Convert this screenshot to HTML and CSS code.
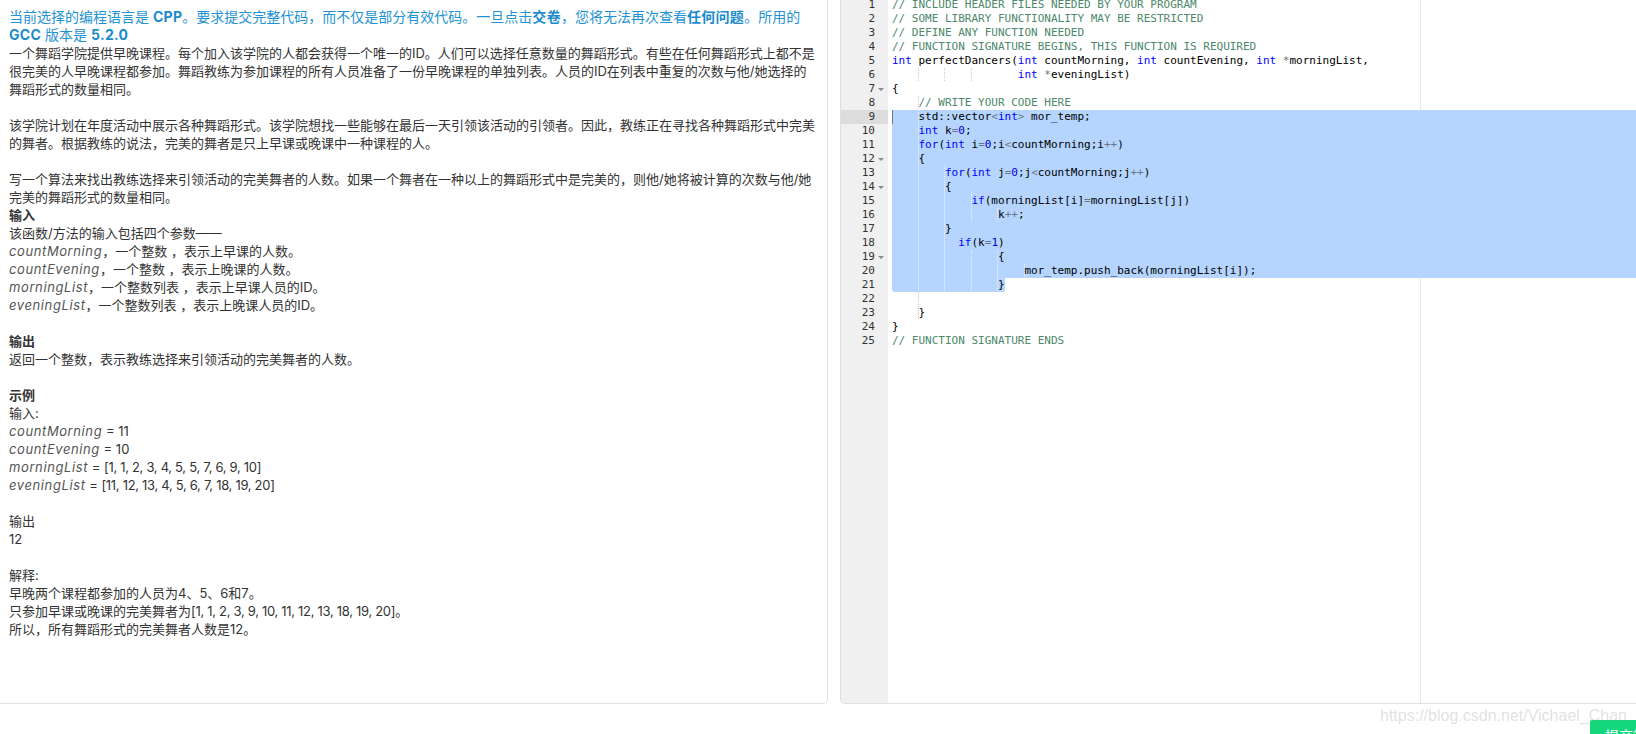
FILE: index.html
```html
<!DOCTYPE html>
<html lang="zh-CN">
<head>
<meta charset="utf-8">
<title>perfectDancers</title>
<link rel="stylesheet" href="styles.css">
</head>
<body>
<div class="page">
  <div class="main">
    <section class="problem">
      <p class="notice">当前选择的编程语言是 <b>CPP</b>。要求提交完整代码，而不仅是部分有效代码。一旦点击<b>交卷</b>，您将无法再次查看<b>任何问题</b>。所用的<br><b>GCC</b> 版本是 <b>5.2.0</b></p>
      <p class="gap">一个舞蹈学院提供早晚课程。每个加入该学院的人都会获得一个唯一的ID。人们可以选择任意数量的舞蹈形式。有些在任何舞蹈形式上都不是<br>很完美的人早晚课程都参加。舞蹈教练为参加课程的所有人员准备了一份早晚课程的单独列表。人员的ID在列表中重复的次数与他/她选择的<br>舞蹈形式的数量相同。</p>
      <p class="gap">该学院计划在年度活动中展示各种舞蹈形式。该学院想找一些能够在最后一天引领该活动的引领者。因此，教练正在寻找各种舞蹈形式中完美<br>的舞者。根据教练的说法，完美的舞者是只上早课或晚课中一种课程的人。</p>
      <p>写一个算法来找出教练选择来引领活动的完美舞者的人数。如果一个舞者在一种以上的舞蹈形式中是完美的，则他/她将被计算的次数与他/她<br>完美的舞蹈形式的数量相同。</p>
      <h4>输入</h4>
      <p class="gap">该函数/方法的输入包括四个参数——<br><i>countMorning</i>，一个整数 ，表示上早课的人数。<br><i>countEvening</i>，一个整数 ，表示上晚课的人数。<br><i>morningList</i>，一个整数列表 ，表示上早课人员的ID。<br><i>eveningList</i>，一个整数列表 ，表示上晚课人员的ID。</p>
      <h4>输出</h4>
      <p class="gap">返回一个整数，表示教练选择来引领活动的完美舞者的人数。</p>
      <h4>示例</h4>
      <p class="gap">输入:<br><i>countMorning</i> = 11<br><i>countEvening</i> = 10<br><i>morningList</i> = <span class="nums">[1, 1, 2, 3, 4, 5, 5, 7, 6, 9, 10]</span><br><i>eveningList</i> = <span class="nums">[11, 12, 13, 4, 5, 6, 7, 18, 19, 20]</span></p>
      <p class="gap">输出<br>12</p>
      <p>解释:<br>早晚两个课程都参加的人员为4、5、6和7。<br>只参加早课或晚课的完美舞者为<span class="nums">[1, 1, 2, 3, 9, 10, 11, 12, 13, 18, 19, 20]</span>。<br>所以，所有舞蹈形式的完美舞者人数是12。</p>
    </section>

    <section class="editor">
      <div class="gutter">
        <div class="gutter-cells">
          <div class="cell"><span>1</span><i class="fold"></i></div>
          <div class="cell"><span>2</span><i class="fold"></i></div>
          <div class="cell"><span>3</span><i class="fold"></i></div>
          <div class="cell"><span>4</span><i class="fold"></i></div>
          <div class="cell"><span>5</span><i class="fold"></i></div>
          <div class="cell"><span>6</span><i class="fold"></i></div>
          <div class="cell"><span>7</span><i class="fold open"></i></div>
          <div class="cell"><span>8</span><i class="fold"></i></div>
          <div class="cell active"><span>9</span><i class="fold"></i></div>
          <div class="cell"><span>10</span><i class="fold"></i></div>
          <div class="cell"><span>11</span><i class="fold"></i></div>
          <div class="cell"><span>12</span><i class="fold open"></i></div>
          <div class="cell"><span>13</span><i class="fold"></i></div>
          <div class="cell"><span>14</span><i class="fold open"></i></div>
          <div class="cell"><span>15</span><i class="fold"></i></div>
          <div class="cell"><span>16</span><i class="fold"></i></div>
          <div class="cell"><span>17</span><i class="fold"></i></div>
          <div class="cell"><span>18</span><i class="fold"></i></div>
          <div class="cell"><span>19</span><i class="fold open"></i></div>
          <div class="cell"><span>20</span><i class="fold"></i></div>
          <div class="cell"><span>21</span><i class="fold"></i></div>
          <div class="cell"><span>22</span><i class="fold"></i></div>
          <div class="cell"><span>23</span><i class="fold"></i></div>
          <div class="cell"><span>24</span><i class="fold"></i></div>
          <div class="cell"><span>25</span><i class="fold"></i></div>
        </div>
      </div>
      <div class="scroller">
        <div class="print-margin"></div>
        <div class="lines">
<div class="line"><span class="c">// INCLUDE HEADER FILES NEEDED BY YOUR PROGRAM</span></div>
<div class="line"><span class="c">// SOME LIBRARY FUNCTIONALITY MAY BE RESTRICTED</span></div>
<div class="line"><span class="c">// DEFINE ANY FUNCTION NEEDED</span></div>
<div class="line"><span class="c">// FUNCTION SIGNATURE BEGINS, THIS FUNCTION IS REQUIRED</span></div>
<div class="line"><span class="k">int</span> perfectDancers(<span class="k">int</span> countMorning, <span class="k">int</span> countEvening, <span class="k">int</span> <span class="o">*</span>morningList,</div>
<div class="line"><span class="ig">    </span><span class="ig">    </span><span class="ig">    </span>       <span class="k">int</span> <span class="o">*</span>eveningList)</div>
<div class="line">{</div>
<div class="line"><span class="ig">    </span><span class="c">// WRITE YOUR CODE HERE</span></div>
<div class="line sel"><span class="cursor"></span><span class="ig">    </span>std::vector<span class="o">&lt;</span><span class="k">int</span><span class="o">&gt;</span> mor_temp;</div>
<div class="line sel"><span class="ig">    </span><span class="k">int</span> k<span class="o">=</span><span class="n">0</span>;</div>
<div class="line sel"><span class="ig">    </span><span class="k">for</span>(<span class="k">int</span> i<span class="o">=</span><span class="n">0</span>;i<span class="o">&lt;</span>countMorning;i<span class="o">++</span>)</div>
<div class="line sel"><span class="ig">    </span>{</div>
<div class="line sel"><span class="ig">    </span><span class="ig">    </span><span class="k">for</span>(<span class="k">int</span> j<span class="o">=</span><span class="n">0</span>;j<span class="o">&lt;</span>countMorning;j<span class="o">++</span>)</div>
<div class="line sel"><span class="ig">    </span><span class="ig">    </span>{</div>
<div class="line sel"><span class="ig">    </span><span class="ig">    </span><span class="ig">    </span><span class="k">if</span>(morningList[i]<span class="o">=</span>morningList[j])</div>
<div class="line sel"><span class="ig">    </span><span class="ig">    </span><span class="ig">    </span><span class="ig">    </span>k<span class="o">++</span>;</div>
<div class="line sel"><span class="ig">    </span><span class="ig">    </span>}</div>
<div class="line sel"><span class="ig">    </span><span class="ig">    </span>  <span class="k">if</span>(k<span class="o">=</span><span class="n">1</span>)</div>
<div class="line sel"><span class="ig">    </span><span class="ig">    </span><span class="ig">    </span><span class="ig">    </span>{</div>
<div class="line sel"><span class="ig">    </span><span class="ig">    </span><span class="ig">    </span><span class="ig">    </span><span class="ig">    </span>mor_temp.push_back(morningList[i]);</div>
<div class="line"><span class="sel-end"><span class="ig">    </span><span class="ig">    </span><span class="ig">    </span><span class="ig">    </span>}</span></div>
<div class="line"><span class="ig">    </span></div>
<div class="line"><span class="ig">    </span>}</div>
<div class="line">}</div>
<div class="line"><span class="c">// FUNCTION SIGNATURE ENDS</span></div>
        </div>
      </div>
    </section>
  </div>

  <footer class="footer">
    <span class="watermark">https://blog.csdn.net/Vichael_Chan</span>
    <button class="submit" type="button">提交答案</button>
  </footer>
</div>
</body>
</html>
```

FILE: styles.css
```css
html, body {
  margin: 0;
  padding: 0;
  background: #ffffff;
}

body {
  width: 1636px;
  height: 734px;
  overflow: hidden;
}

.page {
  display: flex;
  flex-direction: column;
  height: 734px;
}

.main {
  display: flex;
  gap: 12px;
  height: 704px;
  flex: none;
}

/* ---------- problem statement ---------- */
.problem {
  width: 828px;
  flex: none;
  box-sizing: border-box;
  padding: 8px 0 0 9px;
  border-right: 1px solid #dcdfe6;
  border-bottom: 1px solid #dcdfe6;
  border-bottom-right-radius: 5px;
  font-family: "Inter", "Noto Sans CJK SC", sans-serif;
  font-size: 13px;
  line-height: 18px;
  color: #333333;
  overflow: hidden;
}

.problem p {
  margin: 0;
  white-space: nowrap;
}

.problem .gap {
  margin-bottom: 18px;
}

.problem h4 {
  margin: 0;
  font-size: 13px;
  line-height: 18px;
  font-weight: 700;
  color: #333333;
}

.problem i {
  color: #555555;
  font-style: italic;
  letter-spacing: 0.6px;
}

.problem .nums {
  letter-spacing: -0.3px;
}

.problem .notice {
  color: #1f93d3;
  font-size: 14px;
  line-height: 18px;
}

.problem .notice b {
  font-weight: 700;
  color: #1a8bcb;
  letter-spacing: 0.3px;
}

/* ---------- code editor ---------- */
.editor {
  flex: 1;
  display: flex;
  box-sizing: border-box;
  border-left: 1px solid #dcdfe6;
  border-bottom: 1px solid #dcdfe6;
  border-bottom-left-radius: 5px;
  overflow: hidden;
  font-family: "DejaVu Sans Mono", "Liberation Mono", monospace;
  font-size: 11px;
  line-height: 14px;
}

.gutter {
  width: 47px;
  flex: none;
  background: #f0f0f0;
  color: #333333;
}

.gutter-cells {
  margin-top: -2px;
}

.cell {
  height: 14px;
  display: flex;
  justify-content: flex-end;
  align-items: center;
}

.cell.active {
  background: #dcdcdc;
}

.fold {
  width: 13px;
  height: 14px;
  display: flex;
  align-items: center;
  justify-content: center;
}

.fold.open::before {
  content: "";
  display: block;
  width: 0;
  height: 0;
  margin-right: 1px;
  border-left: 3px solid transparent;
  border-right: 3px solid transparent;
  border-top: 3px solid #8a8a8a;
}

.scroller {
  flex: 1;
  position: relative;
  color: #000000;
}

.print-margin {
  position: absolute;
  left: 532px;
  top: 0;
  bottom: 0;
  width: 1px;
  background: #e8e8e8;
}

.lines {
  position: relative;
  margin-top: -2px;
  padding-left: 4px;
}

.line {
  height: 14px;
  white-space: pre;
  position: relative;
}

.line.sel {
  background: #b5d5ff;
}

.sel-end {
  display: inline-block;
  height: 14px;
  vertical-align: top;
  background: #b5d5ff;
  border-radius: 0 0 3px 3px;
}

.ig {
  display: inline-block;
  height: 14px;
  vertical-align: top;
  background-image: repeating-linear-gradient(to bottom, #c8c8c8 0 1px, transparent 1px 2px);
  background-size: 1px 100%;
  background-position: right top;
  background-repeat: no-repeat;
}

.sel .ig,
.sel-end .ig {
  background-image: repeating-linear-gradient(to bottom, rgba(255,255,255,0.75) 0 1px, transparent 1px 2px);
}

.cursor {
  position: absolute;
  left: 0;
  top: 0;
  width: 1px;
  height: 14px;
  background: #777777;
}

.c { color: rgb(76, 136, 107); }
.k { color: rgb(0, 0, 255); }
.o { color: rgb(104, 118, 135); }
.n { color: rgb(0, 0, 205); }

/* ---------- footer ---------- */
.footer {
  position: relative;
  height: 30px;
  flex: none;
  display: flex;
  justify-content: flex-end;
  align-items: flex-start;
  padding-top: 16px;
  box-sizing: border-box;
}

.submit {
  width: 92px;
  height: 30px;
  margin-right: -46px;
  padding: 0 0 0 15px;
  box-sizing: border-box;
  border: 0;
  border-radius: 2px;
  background: #14d77b;
  color: #ffffff;
  font-family: "Noto Sans CJK SC", sans-serif;
  font-size: 14px;
  line-height: 18px;
  text-align: left;
  vertical-align: top;
  display: block;
}

.watermark {
  position: absolute;
  right: 9px;
  top: 3px;
  z-index: 2;
  font-family: "Liberation Sans", Arial, sans-serif;
  font-size: 16px;
  line-height: 18px;
  color: rgba(150, 150, 150, 0.3);
  white-space: nowrap;
}
```
